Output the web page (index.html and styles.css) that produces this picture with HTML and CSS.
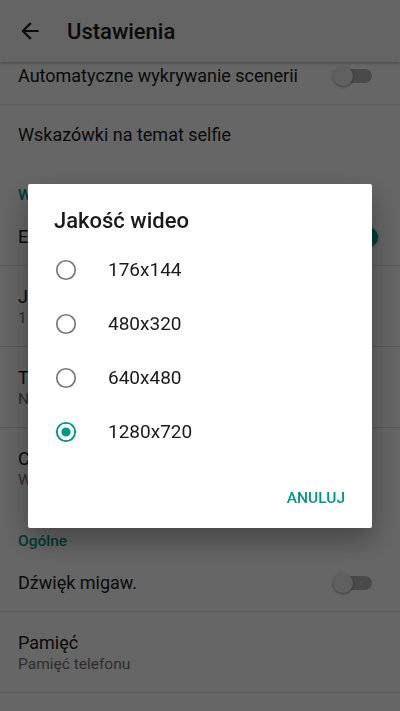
FILE: index.html
```html
<!DOCTYPE html>
<html lang="pl">
<head>
  <meta charset="UTF-8" />
  <meta name="viewport" content="width=device-width, initial-scale=1.0"/>
  <title>Ustawienia</title>
  <link rel="stylesheet" href="styles.css">
</head>
<body>

  <header class="toolbar">
    <svg class="back" viewBox="0 0 24 24" width="26" height="26">
      <path d="M20 11H7.83l5.59-5.59L12 4l-8 8 8 8 1.41-1.41L7.83 13H20v-2z" fill="#212121"/>
    </svg>
    <h1>Ustawienia</h1>
  </header>

  <main class="list">
    <div class="row line">
      <span class="title">Automatyczne wykrywanie scenerii</span>
      <span class="switch"><span class="track"></span><span class="thumb"></span></span>
    </div>
    <div class="row">
      <span class="title">Wskazówki na temat selfie</span>
    </div>

    <div class="category">Wideo</div>
    <div class="row line">
      <span class="title">Elektroniczna stabilizacja</span>
      <span class="switch on"><span class="track"></span><span class="thumb"></span></span>
    </div>
    <div class="row two line">
      <span class="title">Jakość wideo</span>
      <span class="sub">1280x720</span>
    </div>
    <div class="row two line">
      <span class="title">Tryb nagrywania</span>
      <span class="sub">Normalny</span>
    </div>
    <div class="row two">
      <span class="title">Czas nagrywania</span>
      <span class="sub">Wyłączony</span>
    </div>

    <div class="category">Ogólne</div>
    <div class="row line">
      <span class="title">Dźwięk migaw.</span>
      <span class="switch"><span class="track"></span><span class="thumb"></span></span>
    </div>
    <div class="row two line">
      <span class="title">Pamięć</span>
      <span class="sub">Pamięć telefonu</span>
    </div>
  </main>

  <!-- dialog over a dimmed page -->
  <div class="scrim">
    <div class="dialog">
      <h2>Jakość wideo</h2>
      <ul class="options">
        <li><span class="radio"></span>176x144</li>
        <li><span class="radio"></span>480x320</li>
        <li><span class="radio"></span>640x480</li>
        <li><span class="radio checked"></span>1280x720</li>
      </ul>
      <div class="actions">
        <button>ANULUJ</button>
      </div>
    </div>
  </div>

</body>
</html>
```

FILE: styles.css
```css
* { box-sizing: border-box; margin: 0; padding: 0; }
html, body { height: 711px; overflow: hidden; }
body { font-family: Roboto, "Noto Sans", sans-serif; background: #fff; color: #1a1a1a; }

.toolbar {
  position: relative;
  z-index: 1;
  height: 62px;
  background: #fafafa;
  display: flex;
  align-items: center;
  padding-left: 17px;
  gap: 24px;
  box-shadow: 0 1px 3px rgba(0,0,0,0.3);
}
.toolbar h1 { font-size: 22px; font-weight: 500; color: #1a1a1a; }

/* list is scrolled a little under the toolbar */
.list { margin-top: -15px; }

.row {
  height: 58px;
  padding: 0 22px 0 18px;
  display: flex;
  align-items: center;
  justify-content: space-between;
}
.row.two { height: 81px; flex-direction: column; align-items: flex-start; justify-content: center; gap: 2px; }
.row.line { border-bottom: 1px solid #e0e0e0; }
.title { font-size: 18px; color: #1a1a1a; }
.sub { font-size: 15.5px; color: #737373; }

.category {
  height: 45px;
  padding: 23px 18px 0;
  font-size: 15.5px;
  font-weight: 500;
  color: #009688;
}

.switch { position: relative; width: 45px; height: 20px; }
.switch .track { position: absolute; left: 5px; right: 6px; top: 3px; height: 14px; border-radius: 7px; background: #b9b9b9; }
.switch .thumb { position: absolute; left: 0; top: 0; width: 20px; height: 20px; border-radius: 50%; background: #f1f1f1; box-shadow: 0 1px 3px rgba(0,0,0,0.4); }
.switch.on .track { background: #80cbc4; }
.switch.on .thumb { left: 25px; background: #009688; }

.scrim {
  position: fixed;
  inset: 0;
  z-index: 2;
  background: rgba(0,0,0,0.6);
  display: flex;
  align-items: center;
  justify-content: center;
}

.dialog {
  width: 344px;
  background: #fff;
  border-radius: 2px;
  box-shadow: 0 12px 30px rgba(0,0,0,0.35);
  padding: 23px 0 12px;
}
.dialog h2 { font-size: 22px; font-weight: 500; line-height: 28px; padding-left: 26px; color: #1a1a1a; }

.options { list-style: none; margin-top: 8px; }
.options li {
  height: 54px;
  display: flex;
  align-items: center;
  gap: 30px;
  padding-left: 26px;
  font-size: 19px;
  color: #1a1a1a;
}
.radio {
  width: 24px;
  height: 24px;
  border-radius: 50%;
  border: 2.4px solid #757575;
  background-clip: content-box;
  box-shadow: inset 0 0 0 2px #fff;
  transform: scale(0.84);
}
.radio.checked { border-color: #009688; background: #009688; box-shadow: inset 0 0 0 4.5px #fff; }

.actions { display: flex; justify-content: flex-end; padding: 21px 19px 0 0; }
.actions button {
  height: 36px;
  padding: 0 8px;
  background: none;
  border: none;
  font-family: Roboto, sans-serif;
  font-size: 15.5px;
  font-weight: 500;
  color: #009688;
}
```
